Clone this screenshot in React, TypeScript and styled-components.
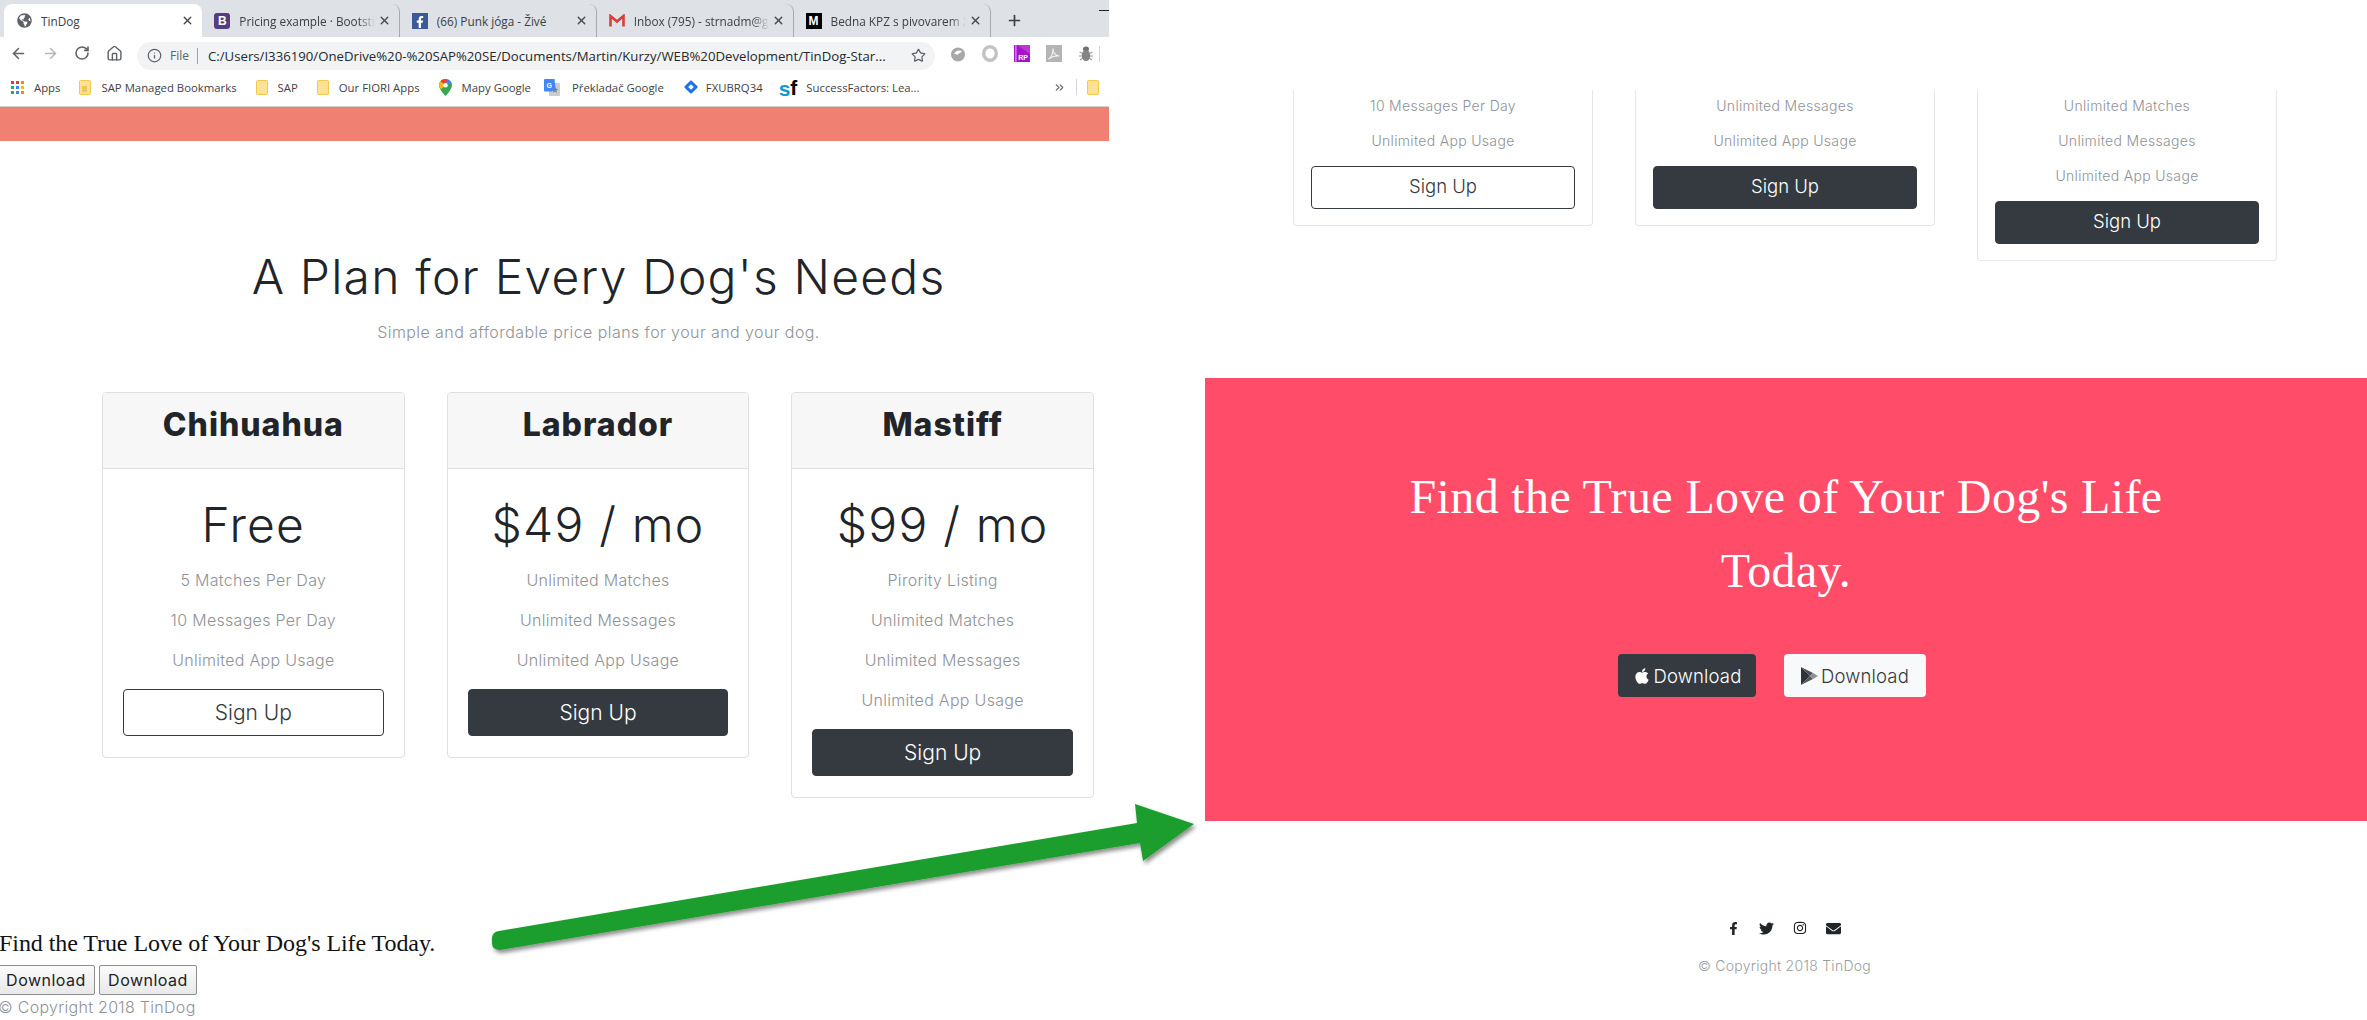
import React from "react";
import styled, { createGlobalStyle } from "styled-components";
import { ArrowLeft, ArrowRight, RotateCw, Home, Info, Star, X, Plus, ChevronsRight } from "lucide-react";
import { FaApple, FaFacebookF, FaTwitter, FaInstagram, FaEnvelope, FaGlobeAmericas } from "react-icons/fa";

const SANS = `"Inter", "Open Sans", sans-serif`;
const UI = `"Open Sans", "Noto Sans", sans-serif`;
const SERIF = `"Liberation Serif", serif`;

const Global = createGlobalStyle`
  html, body { margin: 0; padding: 0; background: #fff; }
  * { box-sizing: border-box; }
`;

const Page = styled.div`
  position: relative;
  display: grid;
  grid-template-columns: 1205px 1fr;
  width: 2367px;
  height: 1020px;
  overflow: hidden;
  background: #fff;
  font-family: ${SANS};
`;
const LeftPane = styled.div`
  display: flex;
  flex-direction: column;
  min-width: 0;
`;
const RightPane = styled.div`
  display: flex;
  flex-direction: column;
  min-width: 0;
`;

/* browser chrome */
const Browser = styled.div`
  width: 1109px;
  font-family: ${UI};
  color: #3c4043;
`;
const TabStrip = styled.div`
  display: flex;
  align-items: flex-end;
  height: 37px;
  padding-left: 4px;
  background: #dee1e6;
`;
const Tab = styled.div<{ $active?: boolean; $divider?: boolean }>`
  display: flex;
  align-items: center;
  gap: 9px;
  width: ${(p) => (p.$active ? "199px" : "197.5px")};
  height: 33px;
  padding: 0 8px 0 12px;
  border-radius: 8px 8px 0 0;
  background: ${(p) => (p.$active ? "#fff" : "transparent")};
  border-right: ${(p) => (p.$divider ? "1px solid #a6a9ae" : "0")};
  background-clip: padding-box;
  font-size: 11.8px;
`;
const TabTitle = styled.span<{ $fade?: boolean }>`
  flex: 1;
  overflow: hidden;
  white-space: nowrap;
  mask-image: ${(p) => (p.$fade ? "linear-gradient(to right, #000 88%, transparent 100%)" : "none")};
`;
const TabCloseIcon = styled(X)`
  flex: none;
  margin-left: -6px;
  color: #45484c;
`;
const NewTab = styled.div`
  display: flex;
  align-items: center;
  height: 33px;
  padding-left: 15px;
  color: #3c4043;
`;
const WindowMin = styled.div`
  width: 10px;
  height: 1px;
  margin: 0 0 26px 76px;
  background: #222;
`;
const Favicon = styled.span<{ $bg?: string; $color?: string; $radius?: number }>`
  flex: none;
  display: inline-flex;
  align-items: center;
  justify-content: center;
  width: 16px;
  height: 16px;
  border-radius: ${(p) => p.$radius ?? 0}px;
  background: ${(p) => p.$bg ?? "transparent"};
  color: ${(p) => p.$color ?? "#5f6368"};
  font: 700 12px "Liberation Sans", sans-serif;
`;
const Toolbar = styled.div`
  display: flex;
  align-items: center;
  height: 33px;
  background: #fff;
`;
const NavButton = styled.span<{ $dim?: boolean }>`
  flex: none;
  display: flex;
  justify-content: center;
  width: 32px;
  color: ${(p) => (p.$dim ? "#b5b7ba" : "#5f6368")};
`;
const NavGroup = styled.div`
  display: flex;
  padding: 0 7px 0 2px;
`;
const Omnibox = styled.div`
  display: flex;
  align-items: center;
  width: 798px;
  height: 28px;
  margin-top: 4px;
  padding: 0 9px 0 10px;
  border-radius: 14px;
  background: #f1f3f4;
  font-size: 12px;
  white-space: nowrap;
`;
const Scheme = styled.span`
  margin-left: 8px;
  padding-right: 8px;
  border-right: 1px solid #9aa0a6;
  line-height: 16px;
  color: #5f6368;
`;
const Url = styled.span`
  flex: 1;
  margin-left: 10px;
  color: #26282b;
  font-size: 13.2px;
`;
const Extensions = styled.div`
  display: flex;
  align-items: center;
  gap: 16px;
  padding-left: 15px;
`;
const ToolbarEdge = styled.span`
  width: 1px;
  height: 16px;
  margin-left: 5px;
  background: #d3d5d8;
`;
const Bookmarks = styled.div`
  display: flex;
  align-items: center;
  gap: 19px;
  height: 37px;
  padding: 0 0 2px 11px;
  border-bottom: 1px solid #cfd0d2;
  background: #fff;
  font-size: 11.35px;
  color: #3f4144;
`;
const Bookmark = styled.span<{ $gap?: number; $pull?: number }>`
  display: inline-flex;
  align-items: center;
  gap: ${(p) => p.$gap ?? 10}px;
  margin-left: ${(p) => -(p.$pull ?? 0)}px;
  white-space: nowrap;
`;
const BookmarkEnd = styled.div`
  display: flex;
  align-items: center;
  gap: 10px;
  margin-left: auto;
  padding-right: 10px;
`;
const EndDivider = styled.span`
  width: 1px;
  height: 16px;
  background: #d3d5d8;
`;
const SfMark = styled.span`
  display: inline-flex;
  align-items: flex-end;
  height: 17px;
  font: 700 21px/17px "Liberation Sans", sans-serif;
  color: #000;
  & > b { color: #0a9bd6; line-height: 15px; }
  & > i { font-style: normal; line-height: 16px; }
`;
const SalmonBar = styled.div`
  height: 34px;
  background: #ef8072;
`;

/* pricing */
const Pricing = styled.section`
  width: 1205px;
  text-align: center;
`;
const PricingTitle = styled.h2`
  margin: 106px 0 0 -8px;
  font-size: 48px;
  line-height: 60px;
  font-weight: 300;
  color: #212529;
  letter-spacing: 1.2px;
`;
const PricingSub = styled.p`
  margin: 13px 0 0 -8px;
  font-size: 16px;
  line-height: 24px;
  font-weight: 350;
  color: #8f9297;
  letter-spacing: 0.42px;
`;
const PlanGrid = styled.div`
  display: grid;
  grid-template-columns: repeat(3, 1fr);
  align-items: start;
  gap: 42px;
  margin: 48px 111px 0 102px;
`;
const PlanCard = styled.article`
  border: 1px solid #dfdfdf;
  border-radius: 4px;
  background: #fff;
`;
const PlanHeader = styled.header`
  height: 76px;
  padding-top: 12px;
  border-bottom: 1px solid #dfdfdf;
  border-radius: 3px 3px 0 0;
  background: #f7f7f7;
  font-size: 32px;
  line-height: 40px;
  font-weight: 800;
  color: #212529;
  letter-spacing: 1px;
`;
const PlanBody = styled.div`
  padding: 20px 20px 21px;
`;
const Price = styled.div`
  font-size: 48px;
  line-height: 71px;
  font-weight: 300;
  color: #212529;
  letter-spacing: 1.2px;
`;
const FeatureList = styled.ul<{ $small?: boolean }>`
  margin: ${(p) => (p.$small ? "-2px 0 8px" : "0 0 9px")};
  padding: 0;
  list-style: none;
`;
const Feature = styled.li<{ $small?: boolean }>`
  font-size: ${(p) => (p.$small ? "14px" : "16px")};
  line-height: ${(p) => (p.$small ? "35px" : "40px")};
  font-weight: 350;
  color: #8f9297;
  letter-spacing: ${(p) => (p.$small ? "0.32px" : "0.3px")};
`;
const SignUp = styled.button<{ $outline?: boolean; $small?: boolean }>`
  display: block;
  width: 100%;
  height: ${(p) => (p.$small ? "43px" : "47px")};
  padding: 0 0 ${(p) => (p.$small ? "4px" : "0")};
  border: 1px solid #343a40;
  border-radius: 4px;
  background: ${(p) => (p.$outline ? "#fff" : "#343a40")};
  color: ${(p) => (p.$outline ? "#343a40" : "#fff")};
  font-family: ${SANS};
  font-size: ${(p) => (p.$small ? "18.5px" : "21px")};
  font-weight: 350;
`;
const LegacyCta = styled.div`
  margin: 131px 0 0 -1px;
  font: 24px/28px ${SERIF};
  letter-spacing: -0.07px;
  color: #111;
  white-space: nowrap;
`;
const LegacyButtons = styled.div`
  display: flex;
  gap: 4px;
  margin: 8px 0 0 -3px;
`;
const LegacyButton = styled.button`
  width: 98px;
  height: 30px;
  padding: 0;
  border: 1px solid #8d8d8d;
  border-radius: 2px;
  background: linear-gradient(#fbfbfb, #e9e9e9);
  color: #222;
  font-family: ${SANS};
  font-size: 16px;
  letter-spacing: 0.5px;
`;
const LegacyCopy = styled.div`
  margin-left: -2px;
  font-size: 16px;
  line-height: 24px;
  font-weight: 350;
  color: #8f9297;
  letter-spacing: 0.3px;
  white-space: nowrap;
`;

/* right-hand page */
const RightPlans = styled.div`
  display: flex;
  align-items: flex-start;
  gap: 42px;
  height: 378px;
  padding: 90px 0 0 88px;
  text-align: center;
`;
const CroppedCard = styled.article`
  width: 300px;
  padding: 0 17px 16px;
  border: 1px solid #e6e6e6;
  border-top: 0;
  border-radius: 0 0 4px 4px;
`;
const Cta = styled.section`
  height: 443px;
  padding-top: 82px;
  background: #ff4c68;
  text-align: center;
`;
const CtaTitle = styled.h3`
  width: 860px;
  margin: 0 auto;
  font: 400 48px/74px ${SERIF};
  letter-spacing: 0.37px;
  color: #fff;
`;
const CtaButtons = styled.div`
  display: flex;
  justify-content: center;
  margin-top: 46px;
`;
const StoreButton = styled.button<{ $dark?: boolean }>`
  display: inline-flex;
  align-items: center;
  justify-content: center;
  gap: 3px;
  width: ${(p) => (p.$dark ? "138px" : "142px")};
  height: 43px;
  margin-right: 28px;
  padding: 0;
  border: 0;
  border-radius: 4px;
  background: ${(p) => (p.$dark ? "#343a40" : "#f8f9fa")};
  color: ${(p) => (p.$dark ? "#fff" : "#343a40")};
  font-family: ${SANS};
  font-size: 18.5px;
  font-weight: 350;
  letter-spacing: 0.15px;
`;
const Footer = styled.footer`
  padding-top: 99px;
  text-align: center;
`;
const SocialRow = styled.div`
  display: flex;
  justify-content: center;
  align-items: center;
  gap: 19px;
  height: 16px;
  margin-left: -5px;
  color: #212529;
`;
const Copyright = styled.p`
  margin: 20px 0 0 -3px;
  font-size: 14px;
  line-height: 20px;
  font-weight: 350;
  color: #9a9da1;
  letter-spacing: 0.27px;
`;
const ArrowOverlay = styled.svg`
  position: absolute;
  left: 0;
  top: 0;
  pointer-events: none;
`;

const Folder = () => (
  <svg width="12" height="15" viewBox="0 0 12 15">
    <rect x="0.5" y="0.5" width="11" height="14" rx="1" fill="#fde293" stroke="#f2c94c" />
  </svg>
);
const ManagedFolder = () => (
  <svg width="12" height="15" viewBox="0 0 12 15">
    <rect x="0.5" y="0.5" width="11" height="14" rx="1" fill="#fde293" stroke="#f2c94c" />
    <rect x="3" y="6" width="5" height="6" fill="#eec75a" />
  </svg>
);
const AppsGrid = () => (
  <svg width="13" height="13" viewBox="0 0 13 13">
    {["#e53935", "#e53935", "#fb8c00", "#34a853", "#4285f4", "#fbbc04", "#34a853", "#4285f4", "#fb8c00"].map((c, i) => (
      <rect key={i} x={(i % 3) * 5} y={Math.floor(i / 3) * 5} width="3" height="3" fill={c} />
    ))}
  </svg>
);
const MapsPin = () => (
  <svg width="13" height="17" viewBox="0 0 13 17">
    <path d="M6.5 0C2.9 0 0 2.8 0 6.3c0 4.4 6.5 10.7 6.5 10.7S13 10.7 13 6.3C13 2.8 10.1 0 6.5 0z" fill="#34a853" />
    <path d="M1.5 2.2 6.5 6.3 2 10.2C.7 8.7 0 7.4 0 6.3 0 4.7.6 3.3 1.5 2.2z" fill="#fbbc04" />
    <path d="M1.5 2.2C2.7.8 4.5 0 6.5 0l2 .4-2 5.9z" fill="#ea4335" />
    <path d="M8.5.4C10 .9 12 2.5 12.7 4.5L6.5 6.3z" fill="#4285f4" />
    <circle cx="6.5" cy="6.3" r="2.3" fill="#fff" />
  </svg>
);
const Diamond = () => (
  <svg width="16" height="16" viewBox="0 0 16 16">
    <rect x="3" y="3" width="10" height="10" transform="rotate(45 8 8)" rx="1" fill="#1a73e8" />
    <rect x="6" y="6" width="4" height="4" transform="rotate(45 8 8)" fill="#fff" />
  </svg>
);
const GmailM = () => (
  <svg width="16" height="13" viewBox="0 0 16 13">
    <path d="M1.5 12.5V2L8 7.5 14.5 2v10.5" fill="none" stroke="#d5403a" strokeWidth="2.6" />
  </svg>
);
const Translate = () => (
  <svg width="16" height="17" viewBox="0 0 16 17">
    <rect x="5" y="4" width="11" height="13" rx="1" fill="#c9ccd1" />
    <path d="M11 7.5l.9 2.2 2.3.2-1.7 1.5.5 2.3-2-1.200-2 1.200.5-2.300L7.800 9.900l2.300-.2z" fill="#7d8187" />
    <path d="M1 0h9.500l1 10.500-4 2H1a1 1 0 0 1-1-1V1a1 1 0 0 1 1-1z" fill="#4285f4" />
    <text x="2.5" y="8.8" fontSize="7" fontWeight="700" fontFamily="Liberation Sans" fill="#fff">G</text>
  </svg>
);
const PlayGlyph = () => (
  <svg width="17" height="18" viewBox="0 0 17 18">
    <path d="M0 0v18l9-9z" fill="#2f3337" />
    <path d="M0 0l9 9 3-3z" fill="#4b5056" />
    <path d="M0 18l9-9 3 3z" fill="#54595f" />
    <path d="M12 6l5 3-5 3-3-3z" fill="#8b8f94" />
  </svg>
);
const SwirlIcon = () => (
  <svg width="16" height="16" viewBox="0 0 16 16">
    <circle cx="8" cy="8.5" r="7" fill="#a8a8a8" />
    <path d="M4 8.5C5 5 8.5 3.500 12 5l-1.500 1.500 2 .5C11.500 6.500 9 6.500 7.500 9c-1-1-2.500-1.200-3.500-.5z" fill="#fff" />
  </svg>
);
const RingIcon = () => (
  <svg width="16" height="17" viewBox="0 0 16 17">
    <ellipse cx="8" cy="8.5" rx="6.3" ry="6.8" fill="none" stroke="#c2c2c2" strokeWidth="3.4" />
    <ellipse cx="8.5" cy="8.5" rx="2.6" ry="4.2" fill="#fff" />
  </svg>
);
const RpIcon = () => (
  <svg width="16" height="17" viewBox="0 0 16 17">
    <rect width="16" height="17" fill="#a414c8" />
    <path d="M3 0h13v9z" fill="#c234d8" />
    <rect x="1.4" width="1" height="17" fill="#e7b6f0" />
    <text x="4.2" y="14.5" fontSize="7" fontWeight="700" fontFamily="Liberation Sans" fill="#fff">RP</text>
  </svg>
);
const AcrobatIcon = () => (
  <svg width="16" height="17" viewBox="0 0 16 17">
    <rect width="16" height="17" fill="#b4b4b4" />
    <path d="M2.5 14C5 12.5 7 8 7 3.5c0 4 2.5 7 6.5 7.500-4-.3-8 .7-11 3z" fill="none" stroke="#eee" strokeWidth="1.2" />
  </svg>
);
const BugIcon = () => (
  <svg width="16" height="17" viewBox="0 0 16 17">
    <path d="M1.5 7l3 1.500M14.500 7l-3 1.500M1 11h3M15 11h-3M2 15l3-2M14 15l-3-2" stroke="#9c9c9c" strokeWidth="1.1" />
    <ellipse cx="8" cy="4" rx="3" ry="2.5" fill="#6f6f6f" />
    <ellipse cx="8" cy="10.5" rx="4.2" ry="5.5" fill="#858585" />
  </svg>
);

const tabs = [
  { title: "Pricing example · Bootstr", icon: <Favicon $bg="#563d7c" $color="#fff" $radius={3}>B</Favicon>, fade: true },
  { title: "(66) Punk jóga - Živé", icon: <Favicon $bg="#3b5998" $color="#fff"><FaFacebookF size={12} style={{ marginTop: 3 }} /></Favicon> },
  { title: "Inbox (795) - strnadm@g", icon: <Favicon><GmailM /></Favicon>, fade: true },
  { title: "Bedna KPZ s pivovarem X", icon: <Favicon $bg="#000" $color="#fff">M</Favicon>, fade: true },
];

const Plans = [
  { name: "Chihuahua", price: "Free", outline: true, features: ["5 Matches Per Day", "10 Messages Per Day", "Unlimited App Usage"] },
  { name: "Labrador", price: "$49 / mo", features: ["Unlimited Matches", "Unlimited Messages", "Unlimited App Usage"] },
  { name: "Mastiff", price: "$99 / mo", features: ["Pirority Listing", "Unlimited Matches", "Unlimited Messages", "Unlimited App Usage"] },
];

export default function App() {
  return (
    <Page>
      <Global />
      <LeftPane>
        <Browser>
          <TabStrip>
            <Tab $active>
              <Favicon><FaGlobeAmericas size={15} /></Favicon>
              <TabTitle>TinDog</TabTitle>
              <TabCloseIcon size={13} strokeWidth={2.6} />
            </Tab>
            {tabs.map((t) => (
              <Tab key={t.title} $divider>
                {t.icon}
                <TabTitle $fade={t.fade}>{t.title}</TabTitle>
                <TabCloseIcon size={13} strokeWidth={2.6} />
              </Tab>
            ))}
            <NewTab><Plus size={17} strokeWidth={2.4} /></NewTab>
            <WindowMin />
          </TabStrip>
          <Toolbar>
            <NavGroup>
              <NavButton><ArrowLeft size={17} strokeWidth={2.2} /></NavButton>
              <NavButton $dim><ArrowRight size={17} strokeWidth={2.2} /></NavButton>
              <NavButton><RotateCw size={16} strokeWidth={2.4} /></NavButton>
              <NavButton><Home size={17} strokeWidth={2} /></NavButton>
            </NavGroup>
            <Omnibox>
              <Info size={15} color="#5f6368" />
              <Scheme>File</Scheme>
              <Url>C:/Users/I336190/OneDrive%20-%20SAP%20SE/Documents/Martin/Kurzy/WEB%20Development/TinDog-Star...</Url>
              <Star size={15} color="#5f6368" strokeWidth={2} />
            </Omnibox>
            <Extensions>
              <SwirlIcon />
              <RingIcon />
              <RpIcon />
              <AcrobatIcon />
              <BugIcon />
            </Extensions>
            <ToolbarEdge />
          </Toolbar>
          <Bookmarks>
            <Bookmark><AppsGrid />Apps</Bookmark>
            <Bookmark><ManagedFolder />SAP Managed Bookmarks</Bookmark>
            <Bookmark><Folder />SAP</Bookmark>
            <Bookmark><Folder />Our FIORI Apps</Bookmark>
            <Bookmark><MapsPin />Mapy Google</Bookmark>
            <Bookmark $pull={6} $gap={12}><Translate />Překladač Google</Bookmark>
            <Bookmark $gap={7}><Diamond />FXUBRQ34</Bookmark>
            <Bookmark $pull={3} $gap={9}><SfMark><b>s</b><i>f</i></SfMark>SuccessFactors: Lea...</Bookmark>
            <BookmarkEnd>
              <ChevronsRight size={13} color="#5f6368" />
              <EndDivider />
              <Folder />
            </BookmarkEnd>
          </Bookmarks>
          <SalmonBar />
        </Browser>
        <Pricing>
          <PricingTitle>A Plan for Every Dog's Needs</PricingTitle>
          <PricingSub>Simple and affordable price plans for your and your dog.</PricingSub>
          <PlanGrid>
            {Plans.map((p) => (
              <PlanCard key={p.name}>
                <PlanHeader>{p.name}</PlanHeader>
                <PlanBody>
                  <Price>{p.price}</Price>
                  <FeatureList>
                    {p.features.map((f) => <Feature key={f}>{f}</Feature>)}
                  </FeatureList>
                  <SignUp $outline={p.outline}>Sign Up</SignUp>
                </PlanBody>
              </PlanCard>
            ))}
          </PlanGrid>
        </Pricing>
        <LegacyCta>Find the True Love of Your Dog's Life Today.</LegacyCta>
        <LegacyButtons>
          <LegacyButton>Download</LegacyButton>
          <LegacyButton>Download</LegacyButton>
        </LegacyButtons>
        <LegacyCopy>© Copyright 2018 TinDog</LegacyCopy>
      </LeftPane>
      <RightPane>
        <RightPlans>
          {[
            { outline: true, features: ["10 Messages Per Day", "Unlimited App Usage"] },
            { features: ["Unlimited Messages", "Unlimited App Usage"] },
            { features: ["Unlimited Matches", "Unlimited Messages", "Unlimited App Usage"] },
          ].map((c, i) => (
            <CroppedCard key={i}>
              <FeatureList $small>
                {c.features.map((f) => <Feature $small key={f}>{f}</Feature>)}
              </FeatureList>
              <SignUp $small $outline={c.outline}>Sign Up</SignUp>
            </CroppedCard>
          ))}
        </RightPlans>
        <Cta>
          <CtaTitle>Find the True Love of Your Dog's Life Today.</CtaTitle>
          <CtaButtons>
            <StoreButton $dark><FaApple size={18} />Download</StoreButton>
            <StoreButton><PlayGlyph />Download</StoreButton>
          </CtaButtons>
        </Cta>
        <Footer>
          <SocialRow>
            <FaFacebookF size={13} />
            <FaTwitter size={15} />
            <FaInstagram size={14} />
            <FaEnvelope size={15} />
          </SocialRow>
          <Copyright>© Copyright 2018 TinDog</Copyright>
        </Footer>
      </RightPane>
      <ArrowOverlay width="2367" height="1020" viewBox="0 0 2367 1020">
        <defs>
          <filter id="arrowShadow" x="-5%" y="-20%" width="110%" height="140%">
            <feDropShadow dx="2" dy="3" stdDeviation="2" floodColor="#000" floodOpacity="0.45" />
          </filter>
        </defs>
        <path
          d="M1135 804 L1194 824 L1143 861 L1140 843 L500 950 Q491 950 492 941 Q491 932 499 931 L1137 823 Z"
          fill="#1e9e2e"
          filter="url(#arrowShadow)"
        />
      </ArrowOverlay>
    </Page>
  );
}
